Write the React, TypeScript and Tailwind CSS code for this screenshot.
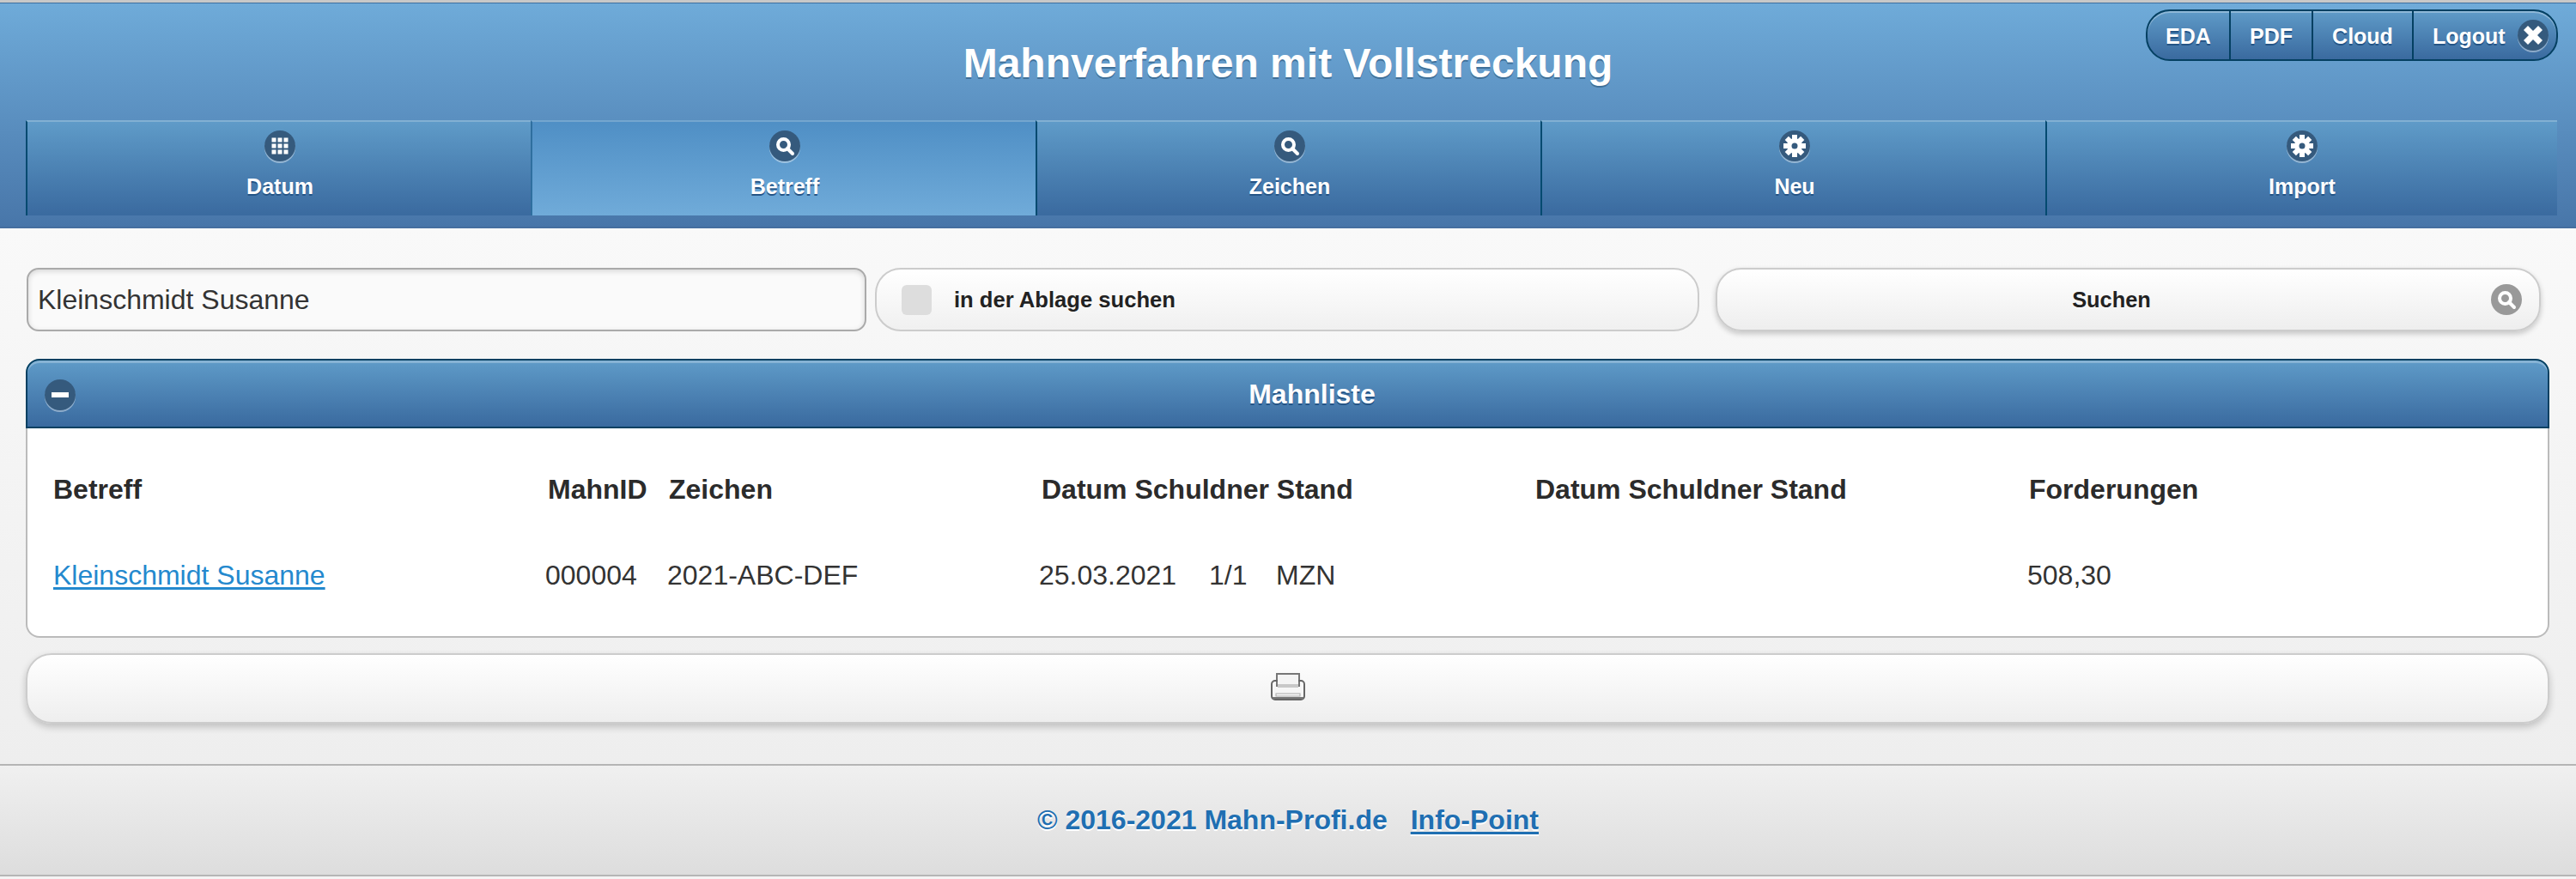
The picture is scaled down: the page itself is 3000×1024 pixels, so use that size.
const dark = "#355a7d";

function Circle({ children, className = "" }: { children: React.ReactNode; className?: string }) {
  return (
    <span className={`block w-[36px] h-[36px] rounded-full bg-[#355a7d] shadow-[0_2px_0_rgba(255,255,255,0.4)] ${className}`}>
      <svg viewBox="0 0 36 36" width="36" height="36">{children}</svg>
    </span>
  );
}

const GridIcon = () => (
  <Circle>
    <g fill="#fff">
      {[8.5, 15.5, 22.5].map((y) =>
        [8.5, 15.5, 22.5].map((x) => <rect key={`${x}-${y}`} x={x} y={y} width="5" height="5" />)
      )}
    </g>
  </Circle>
);

const SearchGlyph = () => (
  <g fill="none" stroke="#fff" strokeWidth="4">
    <circle cx="16.5" cy="16.5" r="6.5" />
    <line x1="21" y1="21" x2="27" y2="27" strokeLinecap="round" />
  </g>
);

const SearchIcon = () => (
  <Circle>
    <SearchGlyph />
  </Circle>
);

const GearIcon = () => (
  <Circle>
    <g fill="#fff">
      {[0, 45, 90, 135].map((a) => (
        <rect key={a} x="15" y="5" width="6" height="26" transform={`rotate(${a} 18 18)`} />
      ))}
      <circle cx="18" cy="18" r="9" />
    </g>
    <circle cx="18" cy="18" r="3.5" fill={dark} />
  </Circle>
);

const XIcon = () => (
  <Circle>
    <g stroke="#fff" strokeWidth="7">
      <line x1="9.5" y1="9.5" x2="26.5" y2="26.5" />
      <line x1="26.5" y1="9.5" x2="9.5" y2="26.5" />
    </g>
  </Circle>
);

const MinusIcon = () => (
  <Circle className="absolute left-[20px] top-[22px]">
    <rect x="8" y="15" width="20" height="6" fill="#fff" />
  </Circle>
);

const PrintIcon = () => (
  <svg viewBox="0 0 40 32" width="40" height="32">
    <rect x="7" y="1" width="26" height="14" fill="#f4f4f4" stroke="#777" strokeWidth="2" />
    <rect x="1" y="9" width="38" height="22" rx="4" fill="none" stroke="#666" strokeWidth="2" />
    <rect x="8" y="8" width="24" height="6" fill="#f4f4f4" />
    <rect x="8" y="13" width="24" height="4" fill="#c8c8c8" />
    <rect x="6" y="24" width="28" height="3" fill="#f6f6f6" stroke="#aaa" strokeWidth="1" />
    <rect x="2" y="28" width="36" height="2" fill="#777" />
  </svg>
);

const tabs = [
  { label: "Datum", icon: <GridIcon /> },
  { label: "Betreff", icon: <SearchIcon />, active: true },
  { label: "Zeichen", icon: <SearchIcon /> },
  { label: "Neu", icon: <GearIcon /> },
  { label: "Import", icon: <GearIcon /> },
];

const blueText = "text-white font-bold text-[25px] [text-shadow:0_2px_0_#245486]";

export default function App() {
  return (
    <div className="w-[3000px] h-[1024px] flex flex-col bg-[#f0f0f0] font-['Liberation_Sans',Arial,sans-serif] text-[#333]">
      <div className="h-[3px] bg-[#c8c8c8]" />
      <header className="relative h-[263px] border-t border-b-2 border-t-[#3f6f9f] border-b-[#456f9f] bg-gradient-to-b from-[#6fabd9] to-[#4876a9] pl-[30px] pr-[22px]">
        <div className="h-[136px] flex items-center justify-center pt-[4px] pr-[8px] mr-[-8px] -translate-x-[4px]">
          <h1 className="text-white font-bold text-[48px] leading-none [text-shadow:0_2px_0_#3f7099]">
            Mahnverfahren mit Vollstreckung
          </h1>
        </div>
        <nav className="absolute left-[2499px] top-[7px] w-[480px] h-[60px] flex rounded-[28px] border-2 border-[#044062] bg-gradient-to-b from-[#5f9bc8] to-[#3a6a9f] shadow-[inset_0_2px_0_rgba(255,255,255,0.3)] overflow-hidden">
          {["EDA", "PDF", "Cloud"].map((t, i) => (
            <span
              key={t}
              className={`flex items-center justify-center pt-[4px] border-r-2 border-[#044062] ${blueText} ${
                i === 0 ? "w-[97px]" : i === 1 ? "w-[96px]" : "w-[117px]"
              }`}
            >
              {t}
            </span>
          ))}
          <span className={`flex-1 flex items-center pl-[22px] gap-[14px] ${blueText}`}>
            <span className="pt-[4px]">Logout</span>
            <XIcon />
          </span>
        </nav>
        <div className="flex h-[111px]">
          {tabs.map((t, i) => (
            <div
              key={t.label}
              className={`flex flex-col items-center border-l-2 border-t-2 pt-[10px] ${
                i === 4 ? "flex-1" : "w-[588px] pl-[2px]"
              } ${
                t.active
                  ? "bg-gradient-to-b from-[#4f8fc5] to-[#70abd9] border-l-[#2f6f9f] border-t-[#74a6cf]"
                  : "bg-gradient-to-b from-[#5f9bc8] to-[#3a6a9f] border-l-[#044a70] border-t-[#82b0d3]"
              }`}
            >
              {t.icon}
              <span className={`mt-[14px] leading-[30px] ${blueText}`}>{t.label}</span>
            </div>
          ))}
        </div>
      </header>

      <main className="h-[624px] bg-gradient-to-b from-[#f9f9f9] to-[#eeeeee] pl-[30px] pt-[46px]">
        <div className="flex pl-[1px] h-[74px]">
          <div className="w-[978px] flex items-center rounded-[14px] border-2 border-[#aaaaaa] bg-[#fafafa] pl-[11px] text-[32px] shadow-[inset_0_2px_6px_rgba(0,0,0,0.15)]">
            Kleinschmidt Susanne
          </div>
          <div className="ml-[10px] w-[960px] flex items-center rounded-[30px] border-2 border-[#cccccc] bg-gradient-to-b from-[#ffffff] to-[#f0f0f0] pl-[29px]">
            <span className="w-[35px] h-[35px] rounded-[6px] bg-[#dddddd]" />
            <span className="ml-[26px] font-bold text-[25.6px] text-[#222] [text-shadow:0_1px_0_#fff]">in der Ablage suchen</span>
          </div>
          <div className="relative ml-[19px] w-[961px] flex items-center justify-center pr-[39px] rounded-[30px] border-2 border-[#cccccc] bg-gradient-to-b from-[#ffffff] to-[#eeeeee] shadow-[0_3px_6px_rgba(0,0,0,0.2)]">
            <span className="font-bold text-[25.4px] text-[#222] [text-shadow:0_1px_0_#fff]">Suchen</span>
            <span className="absolute right-[20px] top-[17px] w-[36px] h-[36px] rounded-full bg-[#999999]">
              <svg viewBox="0 0 36 36" width="36" height="36"><SearchGlyph /></svg>
            </span>
          </div>
        </div>

        <section className="mt-[32px] w-[2939px]">
          <div className="relative h-[81px] flex items-center justify-center pl-[57px] rounded-t-[16px] border-2 border-[#044062] bg-gradient-to-b from-[#5f9bc8] to-[#3a6a9f] shadow-[inset_0_3px_0_rgba(255,255,255,0.25)]">
            <h2 className="text-white font-bold text-[32px] [text-shadow:0_2px_0_#245486]">Mahnliste</h2>
            <MinusIcon />
          </div>
          <div className="h-[244px] rounded-b-[16px] border-2 border-t-0 border-[#bbbbbb] bg-white pt-[51px]">
            <div className="flex h-[40px] items-center pl-[30px] font-bold text-[32px] text-[#2b2b2b]">
              <span className="w-[576px]">Betreff</span>
              <span className="w-[141px]">MahnID</span>
              <span className="w-[434px]">Zeichen</span>
              <span className="w-[575px]">Datum Schuldner Stand</span>
              <span className="w-[575px]">Datum Schuldner Stand</span>
              <span>Forderungen</span>
            </div>
            <div className="flex h-[40px] items-center mt-[60px] pl-[30px] text-[32px] text-[#333]">
              <a className="w-[573px] text-[#2489ce] underline underline-offset-[3px]">Kleinschmidt Susanne</a>
              <span className="w-[142px]">000004</span>
              <span className="w-[433px]">2021-ABC-DEF</span>
              <span className="w-[198px]">25.03.2021</span>
              <span className="w-[78px]">1/1</span>
              <span className="w-[875px]">MZN</span>
              <span>508,30</span>
            </div>
          </div>
          <div className="mt-[18px] h-[82px] flex items-center justify-center pb-[4px] rounded-[30px] border-2 border-[#cccccc] bg-gradient-to-b from-[#ffffff] to-[#eeeeee] shadow-[0_4px_8px_rgba(0,0,0,0.2)]">
            <PrintIcon />
          </div>
        </section>
      </main>

      <footer className="h-[131px] border-y-2 border-[#b5b5b5] bg-gradient-to-b from-[#f0f0f0] to-[#dddddd] flex items-center justify-center gap-[27px] pb-[1px] font-bold text-[32px] text-[#1f6fb2] [text-shadow:0_2px_0_#fff]">
        <span>© 2016-2021 Mahn-Profi.de</span>
        <a className="underline underline-offset-[3px]">Info-Point</a>
      </footer>
      <div className="flex-1 bg-[#f4f4f4]" />
    </div>
  );
}
